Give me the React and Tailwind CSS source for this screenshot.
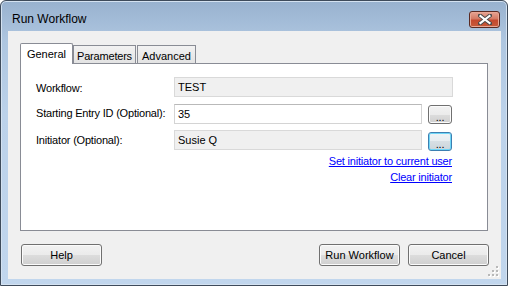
const btn = 'flex items-center justify-center border border-[#707070] rounded-[3px] shadow-[inset_0_0_0_1px_#fbfbfb] bg-[linear-gradient(to_bottom,#f2f2f2_0%,#ebebeb_50%,#dddddd_50%,#cfcfcf_100%)] text-[11px] text-black'

function CloseButton() {
  return (
    <div className="mt-[10px] mr-[7px] w-[31px] h-[17px] rounded-[3px] border border-[#5a2a22] shadow-[inset_0_0_0_1px_#e8a795] bg-[linear-gradient(to_bottom,#e7a594_0%,#d47a64_45%,#c4482e_55%,#c75a3a_100%)] flex items-center justify-center">
      <svg width="14" height="11" viewBox="0 0 14 11">
        <path d="M2 1.5 L12 9.5 M12 1.5 L2 9.5" stroke="#4a4a4a" strokeWidth="4" strokeLinecap="square" />
        <path d="M2.5 2 L11.5 9 M11.5 2 L2.5 9" stroke="#ffffff" strokeWidth="2.2" strokeLinecap="square" />
      </svg>
    </div>
  )
}

function Grip() {
  const dots = [[8, 0], [4, 4], [8, 4], [0, 8], [4, 8], [8, 8]]
  return (
    <svg className="absolute right-[2px] bottom-[2px]" width="11" height="11" viewBox="0 0 11 11">
      {dots.map(([x, y]) => (
        <g key={`${x}-${y}`}>
          <rect x={x + 1} y={y + 1} width="2" height="2" fill="#ffffff" />
          <rect x={x} y={y} width="2" height="2" fill="#b8b8b8" />
        </g>
      ))}
    </svg>
  )
}

export default function App() {
  return (
    <div className="w-[510px] h-[288px] bg-white font-['Liberation_Sans',Arial,sans-serif] text-black">
      <div className="w-[508px] h-[286px] rounded-t-[6px] border border-[#3e4b5b] bg-[linear-gradient(to_bottom,#98b2cf_0%,#aec6e0_14%,#bcd2ea_40%,#c1d6ed_100%)] flex flex-col shadow-[inset_0_0_0_1px_#d4e2f1]">
        <div className="h-[30px] flex justify-between items-start">
          <div className="pl-[11px] pt-[11px] text-[12px] leading-[15px]">Run Workflow</div>
          <CloseButton />
        </div>

        <div className="ml-[7px] w-[493px] h-[248px] bg-[#f0f0f0] relative flex flex-col">
          <div className="pl-[12px] pt-[12px]">
            <div className="flex items-end h-[20px]">
              <div className="w-[53px] h-[21px] -mb-px relative z-10 bg-white border border-b-0 border-[#898c95] rounded-t-[2px] text-[11px] flex items-start justify-center pt-[2px]">General</div>
              <div className="w-[63px] h-[18px] bg-[linear-gradient(to_bottom,#f2f2f2,#e3e3e3)] border border-b-0 border-[#898c95] text-[11px] tracking-[-0.2px] flex items-start justify-center pt-[2px]">Parameters</div>
              <div className="w-[59px] h-[18px] ml-px bg-[linear-gradient(to_bottom,#f2f2f2,#e3e3e3)] border border-b-0 border-[#898c95] text-[11px] flex items-start justify-center pt-[2px]">Advanced</div>
            </div>
            <div className="w-[468px] h-[168px] bg-white border border-[#898c95] pl-[15px] pt-[13px] text-[11px] tracking-[-0.2px]">
              <div className="flex h-[20px]">
                <div className="w-[138px] pt-[5px] leading-[13px]">Workflow:</div>
                <div className="w-[279px] h-[20px] border border-[#d9d9d9] bg-[#f0f0f0] pl-[3px] leading-[18px] tracking-normal">TEST</div>
              </div>
              <div className="flex h-[20px] mt-[7px]">
                <div className="w-[138px] pt-[3px] leading-[13px]">Starting Entry ID (Optional):</div>
                <div className="w-[248px] h-[20px] border border-[#d4d4d4] border-t-[#b9b9b9] bg-white pl-[3px] leading-[18px] tracking-normal">35</div>
                <div className={`${btn} ml-[6px] mt-px w-[24px] h-[19px] items-end pb-[1px] leading-[10px]`}>...</div>
              </div>
              <div className="flex h-[20px] mt-[6px]">
                <div className="w-[138px] pt-[4px] leading-[13px]">Initiator (Optional):</div>
                <div className="w-[248px] h-[20px] border border-[#d9d9d9] bg-[#f0f0f0] pl-[3px] leading-[18px] tracking-normal">Susie Q</div>
                <div className="flex items-end justify-center pb-[1px] leading-[10px] text-[11px] ml-[6px] mt-[2px] w-[24px] h-[19px] rounded-[3px] border border-[#3c7fb1] shadow-[inset_0_0_0_1px_#6fd6f7] bg-[linear-gradient(to_bottom,#eef3f6_0%,#e6ecf0_50%,#d7dfe4_50%,#cbd5db_100%)]">...</div>
              </div>
              <div className="w-[416px] flex flex-col items-end mt-[5px] gap-[3px] leading-[13px]">
                <span className="text-[#0000ff] underline">Set initiator to current user</span>
                <span className="text-[#0000ff] underline">Clear initiator</span>
              </div>
            </div>
          </div>

          <div className="flex justify-between pr-[12px] pl-[13px] mt-[13px]">
            <div className={`${btn} w-[81px] h-[22px]`}>Help</div>
            <div className="flex gap-[8px]">
              <div className={`${btn} w-[81px] h-[22px]`}>Run Workflow</div>
              <div className={`${btn} w-[81px] h-[22px]`}>Cancel</div>
            </div>
          </div>
          <Grip />
        </div>
      </div>
    </div>
  )
}
